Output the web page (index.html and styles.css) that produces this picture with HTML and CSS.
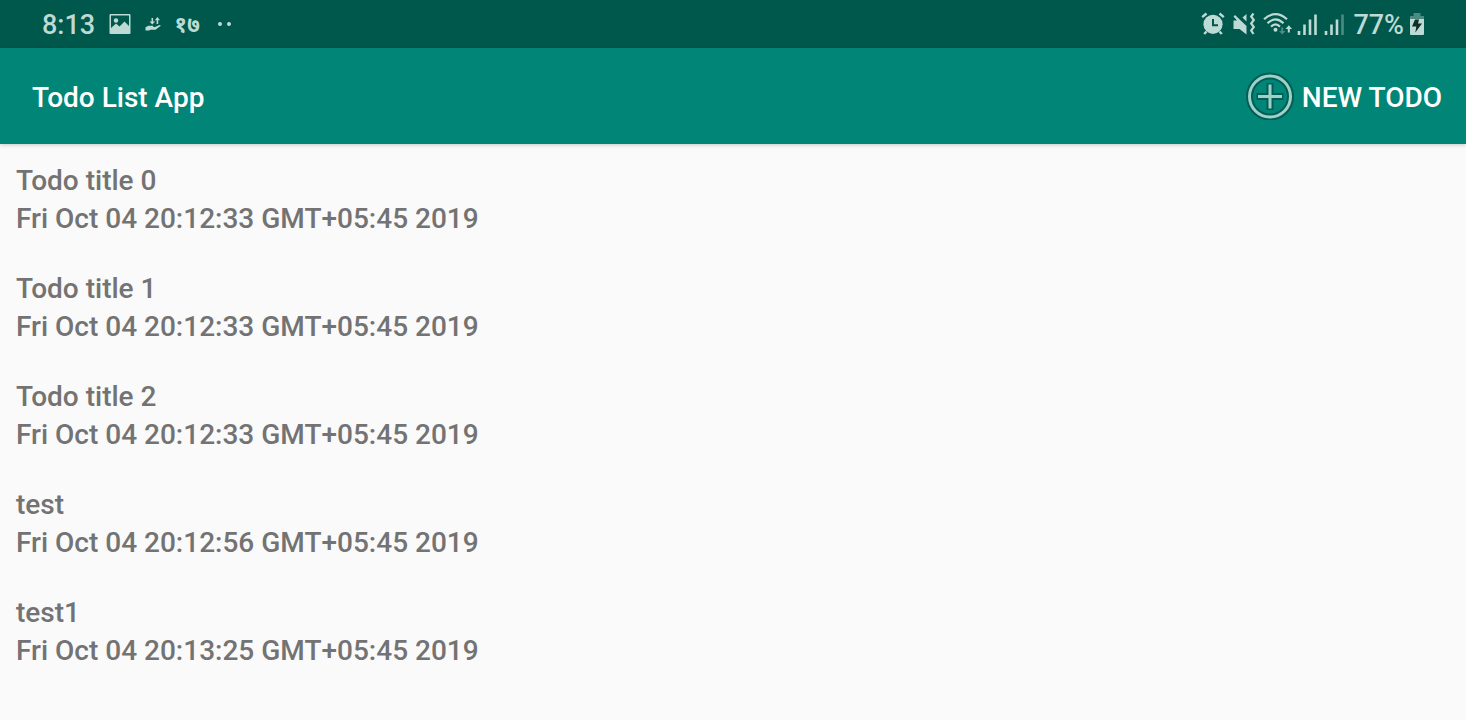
FILE: index.html
```html
<!DOCTYPE html>
<html lang="en">
<head>
<meta charset="utf-8">
<meta name="viewport" content="width=device-width, initial-scale=1">
<title>Todo List App</title>
<link rel="stylesheet" href="styles.css">
</head>
<body>
<div class="status-bar">
  <div class="status-left">
    <time class="clock">8:13</time>
    <svg class="icon-picture" width="22" height="22" viewBox="0 0 22 22" aria-hidden="true">
      <path fill="currentColor" fill-rule="evenodd" d="M1.500 1h19q1 0 1 1v18q0 1-1 1h-19q-1 0-1-1V2q0-1 1-1zM2 2.500v12.500l5-4.500 3.500 3 5-5 4.500 4.500V2.500z"/>
      <circle cx="7" cy="7.500" r="2.200" fill="currentColor"/>
    </svg>
    <svg class="icon-hand" width="17" height="16" viewBox="0 0 17 16" aria-hidden="true">
      <path fill="currentColor" d="M6.500 2h1.600v3.600h2L7.300 8.600 4.500 5.600h2zM11.600 8V4.200H9.800L12.400 1 15 4.200h-1.800V8z"/>
      <path fill="currentColor" d="M.5 11.300 3.500 9.800h4.200q1 .2.500 1.100h1.800l4.500-1.800q1.500 0 1 1L10.500 13.800H5.500L4 14.400H.5z"/>
    </svg>
    <span class="date" lang="ne">१७</span>
    <svg class="icon-more" width="14" height="6" viewBox="0 0 14 6" aria-hidden="true">
      <circle cx="2" cy="3" r="2" fill="currentColor"/><circle cx="11" cy="3" r="2" fill="currentColor"/>
    </svg>
  </div>
  <div class="status-right">
    <svg width="24" height="24" viewBox="0 0 24 24" aria-hidden="true">
      <path d="M1.200 5.200 5.500 1.500M22.800 5.200 18.500 1.500M5.500 19.500 3.200 22M18.500 19.500 20.800 22" fill="none" stroke="currentColor" stroke-width="2.400"/>
      <circle cx="12" cy="12.300" r="9.600" fill="currentColor"/>
      <path class="cutout" d="M12 7v6.200h5" fill="none" stroke-width="2"/>
    </svg>
    <svg class="icon-mute" width="24" height="24" viewBox="0 0 24 24" aria-hidden="true">
      <path fill="currentColor" d="M1.500 8.500H5L1.500 4.500 3 3 14.500 14V22.500L7.500 17H1.500zM10.500 5.500 14.500 2V9.500z"/>
      <path d="M21.500 1.500 19.200 4.500 21.800 8 19.200 11.500 21.800 15 19.200 18.500 21.500 22" fill="none" stroke="currentColor" stroke-width="2.200"/>
    </svg>
    <svg class="icon-wifi" width="30" height="24" viewBox="0 0 30 24" aria-hidden="true">
      <path d="M1 7.200Q12.500-3 24 7.200M4.500 11.300Q12.500 3.500 20.500 11.300M8 14.600Q12.500 10.300 17 14.600" fill="none" stroke="currentColor" stroke-width="2.200"/>
      <circle cx="12.500" cy="17.800" r="2" fill="currentColor"/>
      <path class="faint" d="M18.200 15.500h2V19h2.300l-3.300 3.600L16 19h2.200z" fill="currentColor"/>
      <path d="M24.800 20.500V17h-2.300l3.300-3.800L29.100 17h-2.300v3.500z" fill="currentColor"/>
    </svg>
    <svg class="icon-signal" width="22" height="24" viewBox="0 0 22 24" aria-hidden="true">
      <path d="M2 19v4M7.500 12.500V23M13 7.500V23M18.500 2.500V23" stroke="currentColor" stroke-width="2.600" fill="none"/>
    </svg>
    <svg class="icon-signal-two" width="22" height="24" viewBox="0 0 22 24" aria-hidden="true">
      <path d="M2 19v4M7.500 12.500V23M13 7.500V23" stroke="currentColor" stroke-width="2.600" fill="none"/>
      <path class="faint" d="M18.500 2.500V23" stroke="currentColor" stroke-width="2.600"/>
    </svg>
    <span class="percent">77%</span>
    <svg class="icon-battery" width="14" height="24" viewBox="0 0 14 24" aria-hidden="true">
      <path class="faint" d="M3.500 1h7v3H14v4H0V4h3.500z" fill="currentColor"/>
      <path d="M0 7h14v15q0 1-1 1H1q-1 0-1-1z" fill="currentColor"/>
      <path class="bolt" d="M5 7.500h4L8 11.500h4L5.300 20.500 6.300 14.500H2z"/>
    </svg>
  </div>
</div>
<header class="app-bar">
  <h1 class="app-title">Todo List App</h1>
  <button class="new-todo" type="button">
    <svg width="48" height="48" viewBox="0 0 48 48" aria-hidden="true">
      <g class="add-edge"><circle cx="24" cy="24.500" r="20.500"/><path d="M24 11v27M10.500 24.500h27"/></g>
      <g class="add-line"><circle cx="24" cy="24.500" r="20.500"/><path d="M24 12.500v24M12 24.500h24"/></g>
    </svg>
    <span>NEW TODO</span>
  </button>
</header>
<main>
  <ul class="todo-list">
    <li class="todo"><span>Todo title 0</span><time>Fri Oct 04 20:12:33 GMT+05:45 2019</time></li>
    <li class="todo"><span>Todo title 1</span><time>Fri Oct 04 20:12:33 GMT+05:45 2019</time></li>
    <li class="todo"><span>Todo title 2</span><time>Fri Oct 04 20:12:33 GMT+05:45 2019</time></li>
    <li class="todo"><span>test</span><time>Fri Oct 04 20:12:56 GMT+05:45 2019</time></li>
    <li class="todo"><span>test1</span><time>Fri Oct 04 20:13:25 GMT+05:45 2019</time></li>
  </ul>
</main>
</body>
</html>
```

FILE: styles.css
```css
* { box-sizing: border-box; }
body {
  margin: 0;
  background: #fafafa;
  color: #737373;
  font-family: Roboto, "Noto Sans", sans-serif;
  font-size: 28px;
  font-weight: 500;
  line-height: 38px;
}
svg { display: block; flex: none; }
.status-bar {
  display: flex;
  justify-content: space-between;
  height: 48px;
  padding: 0 42px;
  background: #00574b;
  color: #bddad5;
}
.status-left, .status-right { display: flex; align-items: center; }
.clock, .percent { padding-top: 2px; font-size: 27px; }
.icon-picture { margin-left: 14px; }
.icon-hand { margin-left: 14px; }
.date {
  margin-left: 12px;
  padding-bottom: 2px;
  font-family: "Noto Sans", sans-serif;
  font-size: 23px;
  font-weight: 700;
}
.icon-more { margin-left: 18px; }
.icon-mute { margin-left: 7px; }
.icon-wifi { margin-left: 7px; }
.icon-signal { margin-left: 4px; }
.icon-signal-two { margin-left: 5px; }
.percent { margin-left: 7px; }
.icon-battery { margin-left: 6px; }
.faint { opacity: .4; }
.cutout { stroke: #00574b; }
.bolt { fill: #102d29; }
.app-bar {
  position: relative;
  display: flex;
  align-items: center;
  justify-content: space-between;
  height: 96px;
  padding: 0 24px 0 32px;
  background: #008577;
  color: #fff;
  box-shadow: 0 1px 4px rgba(0, 0, 0, .2);
}
.app-title { margin: 0; padding-top: 4px; font: inherit; }
.new-todo {
  display: flex;
  align-items: center;
  gap: 8px;
  padding: 0;
  border: 0;
  background: none;
  color: inherit;
  font: inherit;
  cursor: pointer;
}
.new-todo span { padding-top: 4px; }
.add-edge { fill: none; stroke: #005e54; stroke-width: 7; }
.add-line { fill: none; stroke: #a0d0ca; stroke-width: 3; }
.todo-list { margin: 0; padding: 2px 0 0; list-style: none; }
.todo { display: flex; flex-direction: column; padding: 16px; }
```
